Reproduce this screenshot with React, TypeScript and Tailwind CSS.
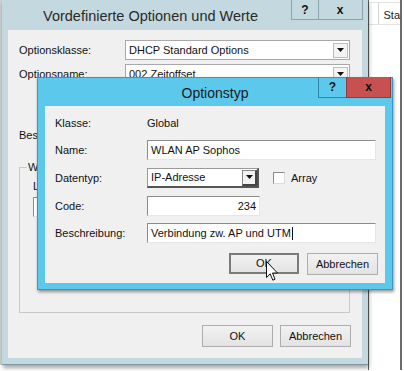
import React from "react";

const font = { fontFamily: '"Liberation Sans", Arial, sans-serif' };

function Arrow() {
  return (
    <svg width="7" height="4" viewBox="0 0 7 4">
      <path d="M0 0 H7 L3.5 4 Z" fill="#111" />
    </svg>
  );
}

function Combo({ text, w }: { text: string; w: string }) {
  return (
    <div className={`flex h-[20px] items-center bg-white border border-[#a9a9a9] pl-[3px] pr-[1px] ${w}`}>
      <span className="flex-1 truncate text-[11px] text-[#111]">{text}</span>
      <div className="flex h-[15px] w-[15px] items-center justify-center border border-[#bdbdbd] bg-[#f4f4f4]">
        <Arrow />
      </div>
    </div>
  );
}

function TextBox({ children, w, right }: { children?: React.ReactNode; w: string; right?: boolean }) {
  return (
    <div
      className={`flex h-[20px] items-center bg-white border-t border-l border-t-[#8c8c8c] border-l-[#8c8c8c] border-b border-r border-b-[#e6e6e6] border-r-[#e6e6e6] px-[3px] text-[11px] text-[#111] ${w} ${right ? "justify-end" : ""}`}
    >
      {children}
    </div>
  );
}

function Btn({ label, w, def }: { label: string; w: string; def?: boolean }) {
  return (
    <div
      className={`flex items-center justify-center bg-gradient-to-b from-[#f2f2f2] to-[#e3e3e3] text-[11px] text-[#111] ${w} ${
        def ? "h-[21px] border-2 border-[#7a7a7a]" : "h-[22px] border border-[#adadad]"
      }`}
    >
      {label}
    </div>
  );
}

function Cursor() {
  return (
    <svg className="absolute left-[266px] top-[261px]" width="12" height="22" viewBox="0 0 12 22">
      <path
        d="M0.5 0.5 V16.5 L4.2 12.8 L6.8 19.2 L9 18.2 L6.5 12 H11.5 Z"
        fill="#fff"
        stroke="#111"
        strokeWidth="1"
        strokeLinejoin="round"
      />
    </svg>
  );
}

export default function App() {
  return (
    <div className="relative w-[404px] h-[371px] overflow-hidden bg-white" style={font}>
      {/* window behind, left edge */}
      <div className="absolute left-0 top-0 h-[365px] w-[3px] bg-[#cfcfcf]" />

      {/* window behind, right side */}
      <div className="absolute left-[368px] top-0 h-[370px] w-[34px] bg-white border-l border-r-2 border-l-[#5e5e5e] border-r-[#6a6a6a]">
        <div className="mt-[2px] flex h-[23px] border-t border-b border-[#e3e3e3]">
          <div className="w-[14px]" />
          <div className="flex-1 border-l border-[#d5d5d5] pl-[4px] pt-[4px] text-[11px] text-[#222]">Sta</div>
        </div>
      </div>

      {/* outer dialog */}
      <div className="absolute left-[2px] top-0 flex h-[365px] w-[366px] flex-col bg-[#c4d8df] border-b border-[#7d98a3] shadow-[1px_3px_4px_rgba(0,0,0,0.35)]">
        <div className="relative h-[30px] shrink-0">
          <div className="w-[297px] pt-[6px] text-center text-[14.5px] text-[#2a2a2a]">
            Vordefinierte Optionen und Werte
          </div>
          <div className="absolute left-[289px] top-0 flex h-[20px] w-[28px] items-center justify-center border border-t-0 border-[#8ba3ae] text-[12px] font-bold text-[#111]">
            ?
          </div>
          <div className="absolute left-[316px] top-0 flex h-[20px] w-[45px] items-center justify-center border border-t-0 border-l-0 border-[#8ba3ae] text-[12px] font-bold text-[#111]">
            x
          </div>
        </div>

        <div className="mx-[6px] mb-[6px] flex flex-1 flex-col bg-[#f0f0f0] px-[11px] pt-[10px] text-[11px] text-[#111]">
          <div className="flex h-[20px] items-center">
            <span className="w-[106px]">Optionsklasse:</span>
            <Combo text="DHCP Standard Options" w="w-[225px]" />
          </div>
          <div className="mt-[4px] flex h-[20px] items-center">
            <span className="w-[106px]">Optionsname:</span>
            <Combo text="002 Zeitoffset" w="w-[225px]" />
          </div>
          <div className="mt-[44px] h-[14px] leading-[14px]">Beschreibung:</div>

          <div className="relative mt-[25px] h-[146px] w-[331px] border border-[#c9c9c9]">
            <span className="absolute left-[7px] top-[-8px] bg-[#f0f0f0] px-[1px] leading-[14px]">Werte</span>
            <div className="pl-[13px] pt-[11px]">
              <div className="h-[14px] leading-[14px]">Long:</div>
              <div className="mt-[4px]">
                <TextBox w="w-[200px]">0</TextBox>
              </div>
            </div>
          </div>

          <div className="mt-[12px] flex justify-end gap-[7px]">
            <Btn label="OK" w="w-[71px]" />
            <Btn label="Abbrechen" w="w-[71px]" />
          </div>
        </div>
      </div>

      {/* inner dialog */}
      <div className="absolute left-[37px] top-[77px] flex h-[213px] w-[356px] flex-col bg-[#5cc8ec] border border-[#3596bf] shadow-[1px_2px_3px_rgba(0,0,0,0.4)]">
        <div className="relative h-[28px] shrink-0">
          <div className="pt-[5px] text-center text-[14px] text-[#1a1a1a]">Optionstyp</div>
          <div className="absolute left-[280px] top-[-1px] flex h-[21px] w-[29px] items-center justify-center border border-t-0 border-[#2f86ab] text-[12px] font-bold text-[#111]">
            ?
          </div>
          <div className="absolute left-[308px] top-[-1px] flex h-[21px] w-[45px] items-center justify-center border border-t-0 border-[#8e3a3a] bg-[#c75050] text-[12px] font-bold text-[#111]">
            x
          </div>
        </div>

        <div className="mx-[7px] mb-[6px] flex flex-1 flex-col bg-[#f0f0f0] pl-[10px] pr-[7px] pt-[10px] text-[11px] text-[#111]">
          <div className="flex h-[14px] items-center">
            <span className="w-[92px]">Klasse:</span>
            <span>Global</span>
          </div>
          <div className="mt-[10px] flex h-[20px] items-center">
            <span className="w-[92px]">Name:</span>
            <TextBox w="w-[229px]">WLAN AP Sophos</TextBox>
          </div>
          <div className="mt-[8px] flex h-[20px] items-center">
            <span className="w-[92px]">Datentyp:</span>
            <div className="flex h-[20px] w-[112px] items-center bg-white border border-[#9a9a9a] border-r-2 border-b-2 border-r-[#555] border-b-[#555] pl-[3px]">
              <span className="flex-1">IP-Adresse</span>
              <div className="flex h-[16px] w-[15px] items-center justify-center border border-[#888] border-r-2 border-b-2 border-r-[#444] border-b-[#444] bg-[#f2f2f2]">
                <Arrow />
              </div>
            </div>
            <div className="ml-[14px] h-[12px] w-[12px] bg-white border border-t-[#8c8c8c] border-l-[#8c8c8c] border-b-[#dcdcdc] border-r-[#dcdcdc]" />
            <span className="ml-[6px]">Array</span>
          </div>
          <div className="mt-[8px] flex h-[20px] items-center">
            <span className="w-[92px]">Code:</span>
            <TextBox w="w-[113px]" right>
              234
            </TextBox>
          </div>
          <div className="mt-[7px] flex h-[20px] items-center">
            <span className="w-[92px]">Beschreibung:</span>
            <TextBox w="w-[229px]">
              Verbindung zw. AP und UTM
              <span className="ml-[1px] inline-block h-[13px] w-px bg-[#111]" />
            </TextBox>
          </div>
          <div className="mt-[10px] flex justify-end gap-[8px]">
            <Btn label="OK" w="w-[70px]" def />
            <Btn label="Abbrechen" w="w-[71px]" />
          </div>
        </div>
      </div>

      <Cursor />
    </div>
  );
}
